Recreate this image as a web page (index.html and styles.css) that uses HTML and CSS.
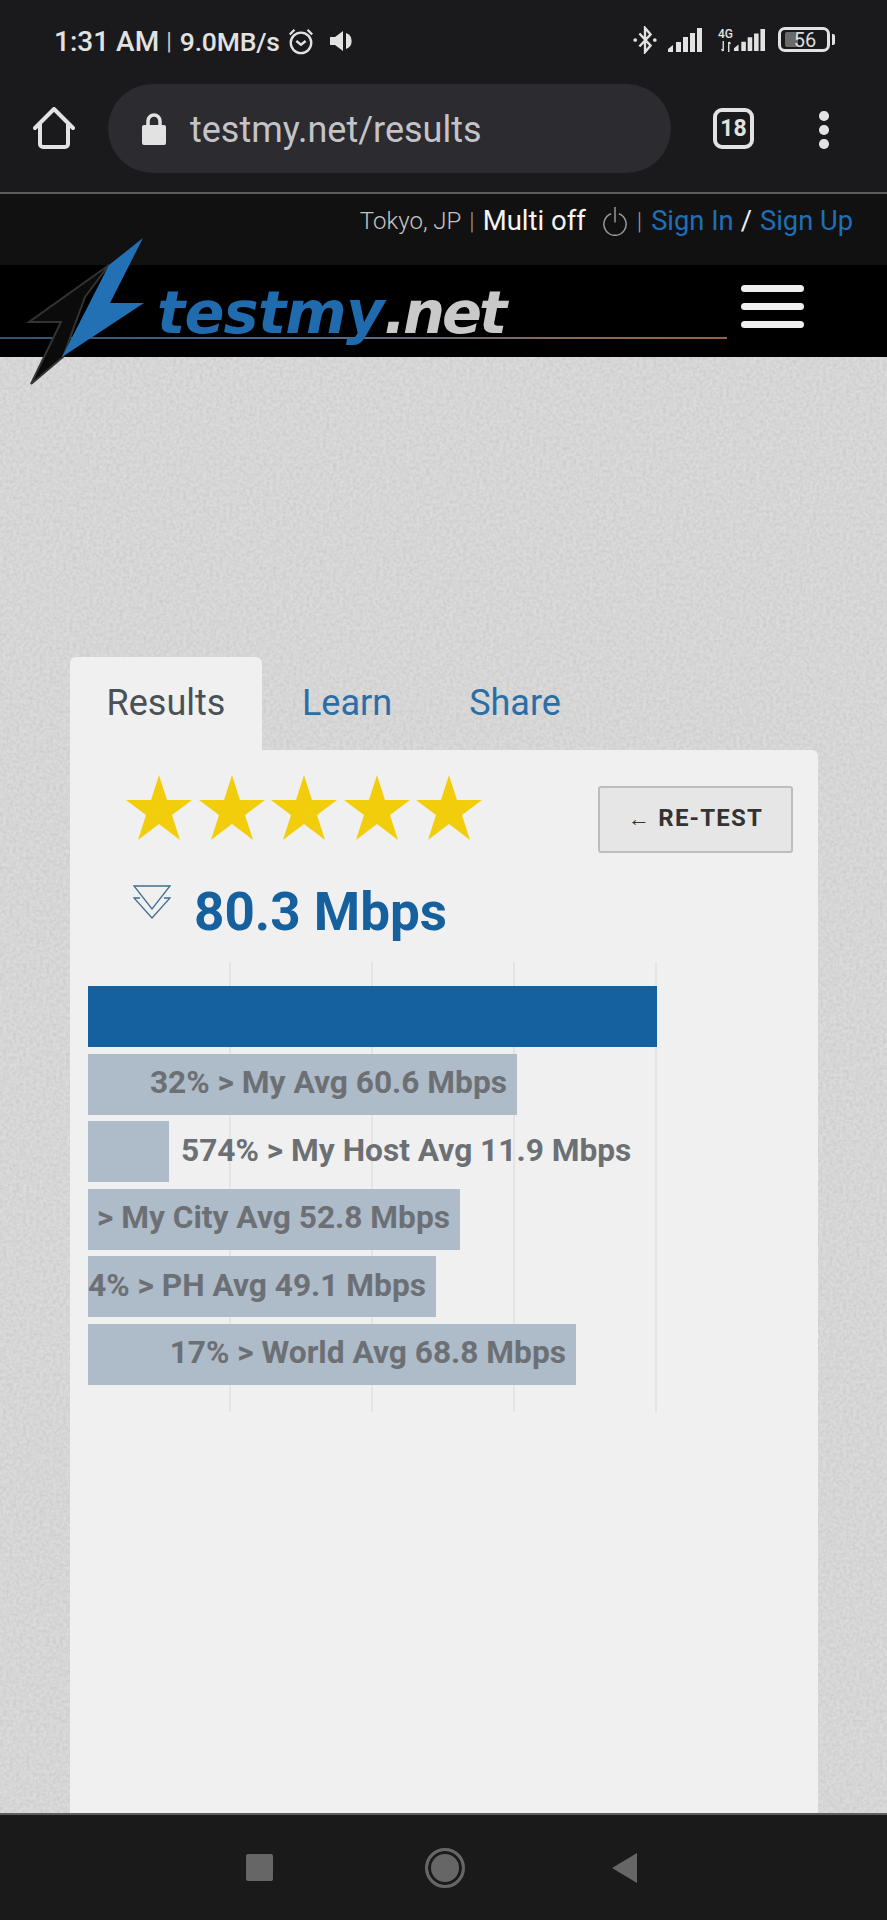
FILE: index.html
```html
<!DOCTYPE html>
<html lang="en">
<head>
<meta charset="utf-8">
<title>testmy.net results</title>
<link rel="stylesheet" href="styles.css">
</head>
<body>
<div class="phone">
  <header class="chrome">
    <div class="status">
      <div class="status-left">
        <span class="clock">1:31 AM</span>
        <span class="clock-sep">|</span>
        <span class="rate">9.0MB/s</span>
        <svg class="ico-alarm" viewBox="0 0 30 30"><circle cx="15" cy="17" r="11" /><path d="M10 15l5 4 5-4" /><path d="M3 8l5-5M27 8l-5-5" /></svg>
        <svg class="ico-speaker" viewBox="0 0 26 24"><path class="solid" d="M1 8h5l8-6v20l-8-6H1z" /><path class="solid" d="M17 4a8.500 8.500 0 0 1 0 16z" /></svg>
      </div>
      <div class="status-right">
        <svg class="ico-bt" viewBox="0 0 26 30"><path d="M7 8l12 13-6 7V2l6 7L7 22" /><circle class="solid" cx="2.500" cy="15" r="2" /><circle class="solid" cx="23.500" cy="15" r="2" /></svg>
        <svg class="ico-signal" viewBox="0 0 34 24"><path class="solid" d="M0 24v-3l5-4v7zM8 24V14h5v10zM15 24V9h5v15zM22 24V5h5v19zM29 24V0h5v24z" /></svg>
        <div class="net">
          <div class="net-label"><b>4G</b><svg class="ico-arrows" viewBox="0 0 12 12"><path d="M3 0v11M1 9l2 2M9 12V1M11 3L9 1" /></svg></div>
          <svg class="ico-signal" viewBox="0 0 34 24"><path class="solid" d="M0 24v-3l5-4v7zM8 24V14h5v10zM15 24V9h5v15zM22 24V5h5v19zM29 24V0h5v24z" /></svg>
        </div>
        <div class="battery"><span class="battery-fill"></span><span class="battery-num">56</span></div>
        <span class="battery-nub"></span>
      </div>
    </div>
    <div class="toolbar">
      <svg class="ico-home" viewBox="0 0 42 42"><path d="M2 21L21 2l19 19M7 17v20a3 3 0 0 0 3 3h22a3 3 0 0 0 3-3V17" /></svg>
      <div class="url">
        <svg class="ico-lock" viewBox="0 0 26 32"><path class="shackle" d="M7 13V8a6 6 0 0 1 12 0v5" /><rect class="solid" x="1" y="12" width="24" height="20" rx="2" /></svg>
        <span class="url-text">testmy.net/results</span>
      </div>
      <div class="tab-count">18</div>
      <div class="dots"><i></i><i></i><i></i></div>
    </div>
  </header>

  <div class="account">
    <span class="loc">Tokyo, JP</span>
    <span class="sep first">|</span>
    <span class="multi">Multi off</span>
    <svg class="ico-power" viewBox="0 0 26 30"><path d="M9 7a11.500 11.500 0 1 0 8 0M13 0v16" /></svg>
    <span class="sep second">|</span>
    <a class="link">Sign In</a>
    <span class="slash">/</span>
    <a class="link">Sign Up</a>
  </div>

  <div class="brand">
    <span class="brand-rule"></span>
    <svg class="bolt" viewBox="0 0 125 150"><path class="bolt-dark" d="M84 28L4 85h32L6 147 38 120 60 60z" /><path class="bolt-blue" d="M118 1L85 66h34L37 120 84 28z" /></svg>
    <div class="wordmark">testmy<span>.net</span></div>
    <div class="burger"><i></i><i></i><i></i></div>
  </div>

  <main class="page">
    <svg class="grain" aria-hidden="true"><filter id="grain"><feTurbulence type="fractalNoise" baseFrequency="0.3" numOctaves="3" seed="4" /><feColorMatrix values="0 0 0 0 0.45 0 0 0 0 0.45 0 0 0 0 0.45 0 0 0 0.7 -0.22" /></filter><rect width="100%" height="100%" filter="url(#grain)" /></svg>
    <nav class="tabs">
      <a class="tab active">Results</a>
      <a class="tab">Learn</a>
      <a class="tab">Share</a>
    </nav>
    <section class="card">
      <div class="rating-row">
        <div class="stars">
          <svg class="star" viewBox="0 0 66 65"><polygon points="33,0 41,25 66,25 46,40 54,65 33,49 12,65 20,40 0,25 25,25" /></svg>
          <svg class="star" viewBox="0 0 66 65"><polygon points="33,0 41,25 66,25 46,40 54,65 33,49 12,65 20,40 0,25 25,25" /></svg>
          <svg class="star" viewBox="0 0 66 65"><polygon points="33,0 41,25 66,25 46,40 54,65 33,49 12,65 20,40 0,25 25,25" /></svg>
          <svg class="star" viewBox="0 0 66 65"><polygon points="33,0 41,25 66,25 46,40 54,65 33,49 12,65 20,40 0,25 25,25" /></svg>
          <svg class="star" viewBox="0 0 66 65"><polygon points="33,0 41,25 66,25 46,40 54,65 33,49 12,65 20,40 0,25 25,25" /></svg>
        </div>
        <button class="retest"><span class="arrow">←</span> RE-TEST</button>
      </div>
      <div class="speed-row">
        <svg class="ico-down" viewBox="0 0 38 34"><path d="M1 1h36L19 24zM7 13L1 13 19 33 37 13h-6" /></svg>
        <div class="speed">80.3 Mbps</div>
      </div>
      <div class="chart">
        <div class="gridlines"><i></i><i></i><i></i><i></i></div>
        <div class="bar main-bar" style="width:569px"></div>
        <div class="bar" style="width:429px"><span>32% &gt; My Avg 60.6 Mbps</span></div>
        <div class="bar-row"><div class="bar" style="width:81px"></div><span class="outside">574% &gt; My Host Avg 11.9 Mbps</span></div>
        <div class="bar" style="width:372px"><span>&gt; My City Avg 52.8 Mbps</span></div>
        <div class="bar" style="width:348px"><span>4% &gt; PH Avg 49.1 Mbps</span></div>
        <div class="bar" style="width:488px"><span>17% &gt; World Avg 68.8 Mbps</span></div>
      </div>
    </section>
  </main>

  <footer class="navbar">
    <span class="nav-square"></span>
    <span class="nav-circle"></span>
    <svg class="nav-back" viewBox="0 0 26 30"><path d="M0 15L25 0v30z" /></svg>
  </footer>
</div>
</body>
</html>
```
FILE: styles.css
```css
* { box-sizing: border-box; }
html, body { margin: 0; padding: 0; }
body { background: #1a1a1c; font-family: Roboto, "Liberation Sans", sans-serif; }
svg { display: block; fill: none; stroke: #e2e2e2; }
svg .solid { fill: #e2e2e2; stroke: none; }

.phone { width: 887px; height: 1920px; display: flex; flex-direction: column; overflow: hidden; }

/* Browser chrome */
.chrome { height: 194px; flex: none; background: #1a1a1c; border-bottom: 2px solid #5c5c5c; display: flex; flex-direction: column; }
.status { height: 84px; flex: none; display: flex; justify-content: space-between; align-items: flex-start; padding: 26px 52px 0 54px; color: #e2e2e2; }
.status-left { display: flex; align-items: center; height: 30px; }
.clock { font-size: 28px; font-weight: 500; }
.clock-sep { font-size: 23px; margin: 0 8px 0 7px; color: #c8c8c8; }
.rate { font-size: 26.500px; font-weight: 500; letter-spacing: -.2px; }
.ico-alarm { width: 28px; height: 28px; margin-left: 7px; stroke-width: 2.500; }
.ico-speaker { width: 26px; height: 24px; margin-left: 14px; stroke-width: 3; }
.status-right { display: flex; align-items: flex-end; height: 26px; }
.ico-bt { width: 26px; height: 28px; margin-bottom: -2px; stroke-width: 2.500; }
.ico-signal { width: 34px; height: 24px; margin-left: 10px; }
.net { display: flex; align-items: flex-end; margin-left: 16px; }
.net-label { display: flex; flex-direction: column; align-items: center; width: 15px; }
.net-label b { font-size: 12px; line-height: 13px; font-weight: 500; }
.ico-arrows { width: 12px; height: 11px; stroke-width: 1.500; }
.net .ico-signal { margin-left: 1px; width: 31px; }
.battery { position: relative; width: 52px; height: 25px; margin-left: 13px; border: 3.500px solid #e2e2e2; border-radius: 7px; display: flex; align-items: center; justify-content: center; }
.battery-fill { position: absolute; left: 4px; top: 2px; bottom: 2px; width: 13px; background: #6a6a6a; border-radius: 2px; }
.battery-num { position: relative; font-size: 20px; line-height: 1; color: #dcdcdc; margin-left: 2px; }
.battery-nub { width: 3px; height: 11px; margin: 0 0 7px 2px; background: #e2e2e2; border-radius: 0 2px 2px 0; }

.toolbar { flex: 1; display: flex; align-items: flex-start; position: relative; }
.ico-home { width: 42px; height: 42px; margin: 23px 0 0 33px; stroke-width: 4; stroke-linejoin: round; stroke-linecap: round; }
.url { width: 563px; height: 89px; margin-left: 33px; background: #2b2b30; border-radius: 45px; display: flex; align-items: center; padding-left: 33px; }
.ico-lock { width: 26px; height: 32px; }
.ico-lock .shackle { stroke-width: 3.500; }
.url-text { margin: 2px 0 0 23px; font-size: 36px; color: #c4c4c8; }
.tab-count { width: 41px; height: 41px; margin: 24px 0 0 42px; border: 4px solid #e2e2e2; border-radius: 9px; color: #e2e2e2; font-size: 23px; font-weight: 700; display: flex; align-items: center; justify-content: center; }
.dots { display: flex; flex-direction: column; gap: 4.500px; margin: 27px 0 0 65px; }
.dots i { width: 9.500px; height: 9.500px; background: #e2e2e2; border-radius: 50%; }

/* Site account bar */
.account { height: 71px; flex: none; background: #111; display: flex; align-items: flex-start; justify-content: flex-end; padding: 10px 34px 0 0; color: #fff; line-height: 34px; }
.loc { font-size: 24px; font-weight: 300; color: #c4c4c4; }
.sep { font-size: 24px; font-weight: 300; color: #999; }
.sep.first { margin: 0 8px; }
.sep.second { margin: 0 9px 0 9px; }
.multi { font-size: 27.500px; color: #f4f4f4; }
.ico-power { width: 26px; height: 29px; margin: 3px 0 0 16px; stroke: #9a9a9a; stroke-width: 1.500; }
.link { font-size: 27.300px; color: #1f6fb8; }
.slash { font-size: 27.300px; margin: 0 8px 0 7px; color: #eee; }

/* Logo band */
.brand { height: 92px; flex: none; background: #000; position: relative; display: flex; align-items: flex-start; justify-content: space-between; padding: 17px 83px 0 157px; z-index: 2; }
.brand-rule { position: absolute; left: 0; top: 72px; width: 727px; height: 2px; background: linear-gradient(90deg, #35506e 0%, #4a6a8c 40%, #8a6a58 80%, #9a5f48 100%); }
.bolt { position: absolute; left: 25px; top: -28px; width: 125px; height: 150px; }
.bolt-dark { fill: #0b0b0b; stroke: #333; stroke-width: 2; }
.bolt-blue { fill: #2371b5; stroke: none; }
.wordmark { position: relative; font-family: "DejaVu Sans", sans-serif; font-weight: 700; font-style: italic; font-size: 59px; line-height: 62px; letter-spacing: -.8px; color: #1f6bad; }
.wordmark span { color: #c9c9c9; letter-spacing: -3px; }
.burger { display: flex; flex-direction: column; gap: 11px; margin-top: 3px; }
.burger i { width: 63px; height: 7px; background: #efefef; border-radius: 3.500px; }

/* Main page */
.page { flex: 1; position: relative; background: #dbdbdb; padding: 300px 69px 0 70px; display: flex; flex-direction: column; min-height: 0; }
.grain { position: absolute; inset: 0; width: 100%; height: 100%; stroke: none; }
.tabs { position: relative; display: flex; height: 93px; flex: none; }
.tab { width: 170px; padding-top: 25px; font-size: 36px; line-height: 42px; color: #2a6ea8; text-align: center; }
.tab:nth-child(3) { width: 166px; }
.tab.active { width: 192px; background: #f0f0f0; color: #495057; border-radius: 6px 6px 0 0; }
.card { position: relative; flex: 1; background: #f0f0f0; border-radius: 0 6px 0 0; padding: 25px 25px 0 18px; display: flex; flex-direction: column; }

.rating-row { display: flex; justify-content: space-between; align-items: flex-start; padding-left: 38px; }
.stars { display: flex; gap: 6.500px; }
.star { width: 66px; height: 65px; fill: #f2cd0c; stroke: none; }
.retest { margin-top: 11px; width: 195px; height: 67px; padding: 0 0 4px; background: #e6e6e6; border: 2px solid #bdbdbd; border-radius: 3px; font-family: Roboto, sans-serif; font-size: 24px; font-weight: 700; letter-spacing: 1.200px; color: #333; }
.arrow { font-size: 22px; font-weight: 700; }

.speed-row { display: flex; align-items: flex-start; height: 122px; padding: 45px 0 0 45px; margin-top: -13px; }
.ico-down { width: 38px; height: 34px; stroke: #3f6f8f; stroke-width: 1.300; }
.speed { margin: -3px 0 0 23px; font-size: 53px; line-height: 60px; font-weight: 700; color: #16609e; }

.chart { position: relative; display: flex; flex-direction: column; gap: 6.600px; padding-top: 24px; height: 450px; flex: none; }
.gridlines { position: absolute; inset: 0; left: 141px; width: 428px; display: flex; justify-content: space-between; }
.gridlines i { width: 2px; background: #e4e4e4; }
.bar { position: relative; height: 61px; flex: none; background: #aebbc8; display: flex; align-items: center; justify-content: flex-end; overflow: hidden; padding-right: 10px; }
.bar span { white-space: nowrap; font-size: 31.700px; font-weight: 700; color: #6c7075; margin-top: -3px; }
.main-bar { background: #15609e; }
.bar-row { position: relative; display: flex; align-items: center; height: 61px; flex: none; }
.outside { margin: -3px 0 0 12px; white-space: nowrap; font-size: 31.700px; font-weight: 700; color: #6c7075; }

/* Android nav */
.navbar { height: 107px; flex: none; background: #1a1a1a; border-top: 2px solid #5e5e5e; display: flex; align-items: center; padding: 0 249px 0 246px; justify-content: space-between; }
.nav-square { width: 27px; height: 27px; background: #666; border-radius: 2px; }
.nav-circle { width: 40px; height: 40px; border-radius: 50%; background: #666; border: 3px solid #666; box-shadow: inset 0 0 0 3px #1a1a1a; margin-left: 4px; }
.nav-back { width: 26px; height: 30px; fill: #666; stroke: none; }
```
